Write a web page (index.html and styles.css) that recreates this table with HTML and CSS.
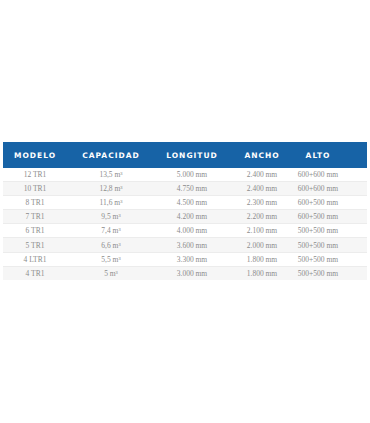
FILE: index.html
```html
<!DOCTYPE html>
<html>
<head>
<meta charset="utf-8">
<link rel="stylesheet" href="styles.css">
</head>
<body>
<div class="wrap">
<table class="spec">
<colgroup>
<col class="c1"><col class="c2"><col class="c3"><col class="c4"><col class="c5"><col class="c6">
</colgroup>
<thead>
<tr><th>MODELO</th><th>CAPACIDAD</th><th>LONGITUD</th><th>ANCHO</th><th>ALTO</th><th></th></tr>
</thead>
<tbody>
<tr><td>12 TR1</td><td>13,5 m³</td><td>5.000 mm</td><td>2.400 mm</td><td>600+600 mm</td><td></td></tr>
<tr><td>10 TR1</td><td>12,8 m³</td><td>4.750 mm</td><td>2.400 mm</td><td>600+600 mm</td><td></td></tr>
<tr><td>8 TR1</td><td>11,6 m³</td><td>4.500 mm</td><td>2.300 mm</td><td>600+500 mm</td><td></td></tr>
<tr><td>7 TR1</td><td>9,5 m³</td><td>4.200 mm</td><td>2.200 mm</td><td>600+500 mm</td><td></td></tr>
<tr><td>6 TR1</td><td>7,4 m³</td><td>4.000 mm</td><td>2.100 mm</td><td>500+500 mm</td><td></td></tr>
<tr><td>5 TR1</td><td>6,6 m³</td><td>3.600 mm</td><td>2.000 mm</td><td>500+500 mm</td><td></td></tr>
<tr><td>4 LTR1</td><td>5,5 m³</td><td>3.300 mm</td><td>1.800 mm</td><td>500+500 mm</td><td></td></tr>
<tr><td>4 TR1</td><td>5 m³</td><td>3.000 mm</td><td>1.800 mm</td><td>500+500 mm</td><td></td></tr>
</tbody>
</table>
</div>
</body>
</html>
```
FILE: styles.css
```css
html, body { margin: 0; padding: 0; background: #fff; }
.wrap { padding: 142px 3px 0 3px; }
.spec { width: 364px; border-collapse: collapse; table-layout: fixed; }
.c1 { width: 64px; } .c2 { width: 88px; } .c3 { width: 74px; } .c4 { width: 66px; } .c5 { width: 46px; } .c6 { width: 26px; }
.spec th {
  background: #1763a6; color: #fff; height: 26px; padding: 0;
  font-family: "DejaVu Sans", Verdana, sans-serif; font-weight: bold;
  font-size: 7.5px; letter-spacing: 1px; text-align: center; white-space: nowrap;
}
.spec td {
  height: 13.1px; padding: 0; border-bottom: 1px solid #ececec;
  font-family: "Liberation Serif", "Times New Roman", serif; font-size: 7.5px;
  color: #8c8c8c; text-align: center; white-space: nowrap;
}
.spec tbody tr:nth-child(even) td { background: #f6f6f6; }
.spec tbody tr:last-child td { border-bottom: none; }
```
